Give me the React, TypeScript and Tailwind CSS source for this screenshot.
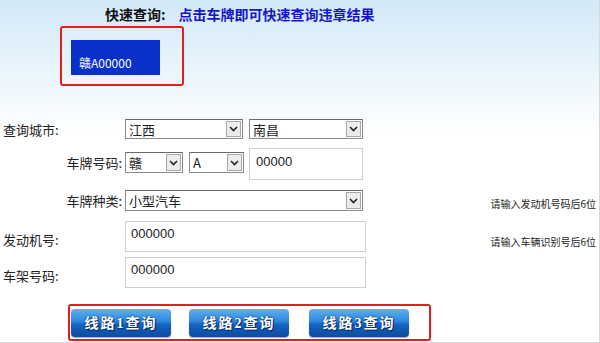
import React from "react";

const cjk = { fontFamily: '"Noto Sans CJK SC", "Liberation Sans", sans-serif' };

function Chevron() {
  return (
    <svg width="9" height="6" viewBox="0 0 9 6">
      <path d="M1 1 L4.5 4.5 L8 1" fill="none" stroke="#222" strokeWidth="1.6" />
    </svg>
  );
}

function FakeSelect({ value, w, h = "h-[20px]", mt = "" }: { value: string; w: string; h?: string; mt?: string }) {
  return (
    <div className={`${w} ${h} ${mt} flex items-stretch border border-[#8a8a8a] border-t-[#6a6a6a] bg-white`}>
      <div className="flex-1 flex items-center pl-[3px] text-[13px] text-[#222] leading-none">{value}</div>
      <div className="w-[15px] m-[1px] flex items-center justify-center bg-[#ececec] border border-[#a8a8a8]">
        <Chevron />
      </div>
    </div>
  );
}

function Btn({ label }: { label: string }) {
  return (
    <div
      className="w-[100px] h-[28px] rounded-[4px] flex items-center justify-center text-white font-bold text-[14px] tracking-[2px] bg-[linear-gradient(to_bottom,#5eb0ee_0%,#2c86dc_45%,#1463c4_55%,#0d4d9e_100%)] shadow-[0_1px_1px_rgba(0,0,0,0.35)]"
      style={{
        fontFamily: '"Liberation Serif", "Noto Sans CJK SC", serif',
        textShadow: "0 0 2px #0b2a66, 1px 1px 1px #0b2a66",
      }}
    >
      {label}
    </div>
  );
}

export default function App() {
  return (
    <div
      className="w-[600px] h-[343px] overflow-hidden flex flex-col border-r border-b border-[#d8d8d8] bg-[linear-gradient(to_bottom,#d3e9f8_0px,#e6f3fb_60px,#ffffff_135px)]"
      style={cjk}
    >
      {/* header */}
      <div className="h-[26px] pl-[105px] flex items-center pt-[2px] text-[14px] font-bold">
        <span className="text-[#111]">快速查询:</span>
        <span className="ml-[13px] text-[#1616c8]">点击车牌即可快速查询违章结果</span>
      </div>

      {/* plate box */}
      <div className="ml-[60px] w-[124px] h-[60px] border-2 border-[#e0201c] rounded-[3px]">
        <div className="mt-[12px] ml-[9px] w-[89px] h-[35px] bg-[#0b2fc9] pl-[8px] pt-[15px] text-[12px] leading-[16px] text-white">
          赣A00000
        </div>
      </div>

      {/* row 1 */}
      <div className="mt-[33px] h-[20px] flex items-center text-[13px] text-[#222]">
        <div className="w-[125px] pl-[3px] pt-[2px]">查询城市:</div>
        <FakeSelect value="江西" w="w-[118px]" />
        <FakeSelect value="南昌" w="w-[114px] ml-[6px]" />
      </div>

      {/* row 2 */}
      <div className="mt-[9px] h-[32px] flex items-start text-[13px] text-[#222]">
        <div className="w-[122px] text-right mt-[5px]">车牌号码:</div>
        <FakeSelect value="赣" w="w-[58px] ml-[3px]" h="h-[21px]" mt="mt-[4px]" />
        <FakeSelect value="A" w="w-[55px] ml-[6px]" h="h-[21px]" mt="mt-[4px]" />
        <div className="ml-[5px] w-[114px] h-[32px] border border-[#cfcfcf] bg-white pl-[6px] pt-[5px] text-[13px] leading-[16px]" style={{ fontFamily: '"Liberation Sans", sans-serif' }}>
          00000
        </div>
      </div>

      {/* row 3 */}
      <div className="mt-[10px] h-[21px] flex items-center text-[13px] text-[#222]">
        <div className="w-[122px] text-right">车牌种类:</div>
        <FakeSelect value="小型汽车" w="w-[238px] ml-[3px]" h="h-[21px]" />
        <div className="ml-auto pr-[3px] self-end text-[10px] leading-[12px] text-[#222] mb-[1px]">请输入发动机号码后6位</div>
      </div>

      {/* row 4 */}
      <div className="mt-[10px] h-[31px] flex items-start text-[13px] text-[#222]">
        <div className="w-[125px] pl-[3px] mt-[9px]">发动机号:</div>
        <div className="w-[241px] h-[31px] border border-[#cfcfcf] bg-white pl-[5px] pt-[4px] text-[13px] leading-[16px]" style={{ fontFamily: '"Liberation Sans", sans-serif' }}>
          000000
        </div>
        <div className="ml-auto pr-[3px] self-end text-[10px] leading-[12px] text-[#222] mb-[4px]">请输入车辆识别号后6位</div>
      </div>

      {/* row 5 */}
      <div className="mt-[5px] h-[31px] flex items-start text-[13px] text-[#222]">
        <div className="w-[125px] pl-[3px] mt-[9px]">车架号码:</div>
        <div className="w-[241px] h-[31px] border border-[#cfcfcf] bg-white pl-[5px] pt-[4px] text-[13px] leading-[16px]" style={{ fontFamily: '"Liberation Sans", sans-serif' }}>
          000000
        </div>
      </div>

      {/* buttons */}
      <div className="mt-[16px] ml-[68px] w-[363px] h-[37px] border-2 border-[#e0201c] rounded-[3px] flex items-start pt-[3px] pl-[1px]">
        <Btn label="线路1查询" />
        <div className="ml-[18px]"><Btn label="线路2查询" /></div>
        <div className="ml-[20px]"><Btn label="线路3查询" /></div>
      </div>
    </div>
  );
}
